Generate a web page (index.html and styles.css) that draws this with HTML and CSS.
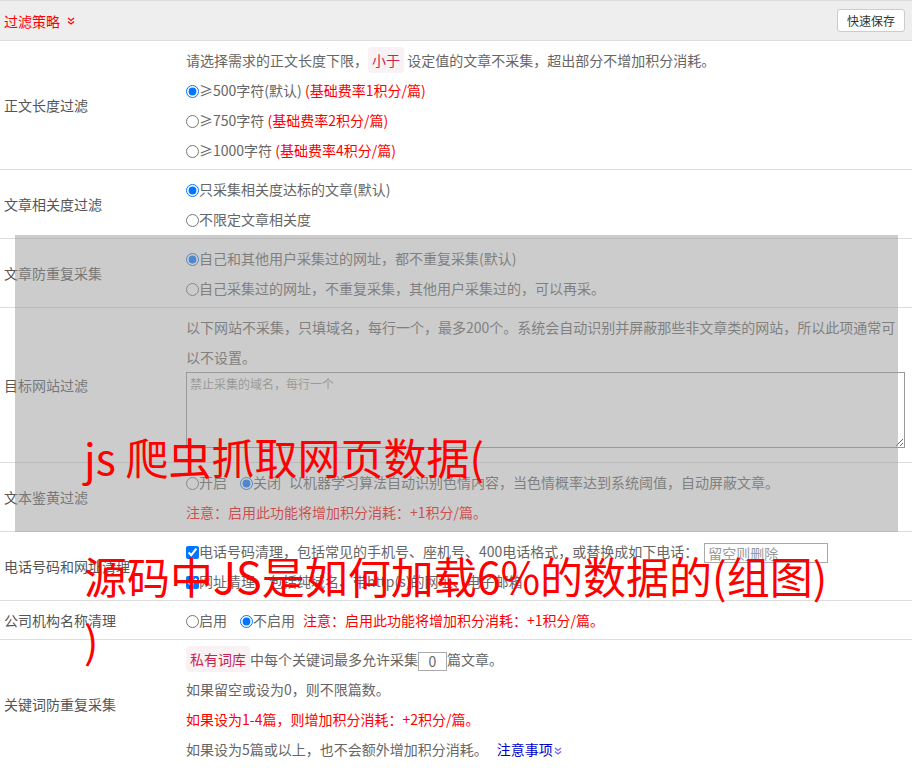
FILE: index.html
```html
<!DOCTYPE html>
<html lang="zh-CN">
<head>
    <meta charset="UTF-8">
    <meta name="viewport" content="width=device-width, initial-scale=1.0">
    <title>过滤策略</title>
    <link rel="stylesheet" href="styles.css">
</head>
<body>
    <div class="panel-head">
        <div class="panel-title">
            过滤策略
            <svg class="chev" width="8" height="8" viewBox="0 0 8 8"><polyline points="1,1 4,3.5 7,1"/><polyline points="1,4.5 4,7 7,4.5"/></svg>
        </div>
        <button class="btn-save">快速保存</button>
    </div>

    <div class="row">
        <div class="row-label">正文长度过滤</div>
        <div class="row-body">
            <div class="line">请选择需求的正文长度下限，<code>小于</code> 设定值的文章不采集，超出部分不增加积分消耗。</div>
            <div class="line"><label><input type="radio" name="len" checked>≥500字符(默认) <span class="red">(基础费率1积分/篇)</span></label></div>
            <div class="line"><label><input type="radio" name="len">≥750字符 <span class="red">(基础费率2积分/篇)</span></label></div>
            <div class="line"><label><input type="radio" name="len">≥1000字符 <span class="red">(基础费率4积分/篇)</span></label></div>
        </div>
    </div>

    <div class="row">
        <div class="row-label">文章相关度过滤</div>
        <div class="row-body">
            <div class="line"><label><input type="radio" name="rel" checked>只采集相关度达标的文章(默认)</label></div>
            <div class="line"><label><input type="radio" name="rel">不限定文章相关度</label></div>
        </div>
    </div>

    <div class="row">
        <div class="row-label">文章防重复采集</div>
        <div class="row-body">
            <div class="line"><label><input type="radio" name="dup" checked>自己和其他用户采集过的网址，都不重复采集(默认)</label></div>
            <div class="line"><label><input type="radio" name="dup">自己采集过的网址，不重复采集，其他用户采集过的，可以再采。</label></div>
        </div>
    </div>

    <div class="row">
        <div class="row-label">目标网站过滤</div>
        <div class="row-body">
            <div class="line">以下网站不采集，只填域名，每行一个，最多200个。系统会自动识别并屏蔽那些非文章类的网站，所以此项通常可以不设置。</div>
            <textarea class="site-list" placeholder="禁止采集的域名，每行一个"></textarea>
        </div>
    </div>

    <div class="row">
        <div class="row-label">文本鉴黄过滤</div>
        <div class="row-body">
            <div class="line"><label class="opt"><input type="radio" name="porn">开启</label><label class="opt last"><input type="radio" name="porn" checked>关闭</label>以机器学习算法自动识别色情内容，当色情概率达到系统阈值，自动屏蔽文章。</div>
            <div class="line red">注意：启用此功能将增加积分消耗：+1积分/篇。</div>
        </div>
    </div>

    <div class="row">
        <div class="row-label">电话号码和网址清理</div>
        <div class="row-body">
            <div class="line"><label><input type="checkbox" checked>电话号码清理，包括常见的手机号、座机号、400电话格式，或替换成如下电话：</label><input class="phone" type="text" placeholder="留空则删除"></div>
            <div class="line"><label><input type="checkbox" checked>网址清理，包括纯域名、带http(s)的网址、电子邮箱</label></div>
        </div>
    </div>

    <div class="row">
        <div class="row-label">公司机构名称清理</div>
        <div class="row-body">
            <div class="line"><label class="opt"><input type="radio" name="org">启用</label><label class="opt last"><input type="radio" name="org" checked>不启用</label><span class="red">注意：启用此功能将增加积分消耗：+1积分/篇。</span></div>
        </div>
    </div>

    <div class="row">
        <div class="row-label">关键词防重复采集</div>
        <div class="row-body">
            <div class="line"><code>私有词库</code>中每个关键词最多允许采集<input class="num" type="text" value="0">篇文章。</div>
            <div class="line">如果留空或设为0，则不限篇数。</div>
            <div class="line red">如果设为1-4篇，则增加积分消耗：+2积分/篇。</div>
            <div class="line">如果设为5篇或以上，也不会额外增加积分消耗。<a class="tips" href="#">注意事项<svg class="chev" width="8" height="8" viewBox="0 0 8 8"><polyline points="1,1 4,3.5 7,1"/><polyline points="1,4.5 4,7 7,4.5"/></svg></a></div>
        </div>
    </div>

    <div class="mask"></div>
    <h1 class="cover-title">
        <span class="first">js 爬虫抓取网页数据(</span>
        <span>源码中JS是如何加载6%的数据的(组图)</span>
        <span>)</span>
    </h1>
</body>
</html>
```

FILE: styles.css
```css
* {
    box-sizing: border-box;
}

html, body {
    overflow: hidden;
}

body {
    margin: 0;
    position: relative;
    font-family: "Noto Sans CJK SC", "Microsoft YaHei", sans-serif;
    font-size: 14px;
    color: #666;
    background: #fff;
}

.panel-head {
    display: flex;
    justify-content: space-between;
    align-items: center;
    height: 41px;
    padding: 0 7px 0 4px;
    background: #eee;
    border-top: 1px solid #ddd;
    border-bottom: 1px solid #ddd;
}

.panel-title {
    display: flex;
    align-items: center;
    gap: 7px;
    color: #f00;
}

.chev {
    fill: none;
    stroke: currentColor;
    stroke-width: 1.2;
}

.btn-save {
    height: 23px;
    padding: 0 9px;
    font-family: inherit;
    font-size: 12px;
    color: #333;
    background: #fff;
    border: 1px solid #ccc;
    border-radius: 3px;
}

.row {
    display: grid;
    grid-template-columns: 186px 1fr;
    border-bottom: 1px solid #ddd;
}

.row-label {
    display: flex;
    align-items: center;
    padding-left: 4px;
    color: #555;
}

.row-body {
    padding: 4px 7px 4px 0;
}

.line {
    line-height: 30px;
}

.red {
    color: #f00;
}

code {
    font-family: inherit;
    font-size: 14px;
    color: #c7254e;
    background: #f9f2f4;
    padding: 3px 4px;
    border-radius: 4px;
}

input[type="radio"],
input[type="checkbox"] {
    width: 13px;
    height: 13px;
    margin: 0;
    vertical-align: -2px;
}

.opt {
    margin-right: 13px;
}

.opt.last {
    margin-right: 8px;
}

.phone {
    width: 124px;
    height: 20px;
    margin-left: 6px;
    padding: 0 3px;
    font-family: inherit;
    font-size: 14px;
    border: 1px solid #aaa;
    vertical-align: middle;
}

.num {
    width: 29px;
    height: 19px;
    padding: 0;
    text-align: center;
    font-family: inherit;
    font-size: 14px;
    color: #666;
    border: 1px solid #aaa;
    vertical-align: middle;
}

::placeholder {
    color: #999;
}

.site-list {
    display: block;
    width: 100%;
    height: 76px;
    margin-bottom: 10px;
    padding: 2px 3px;
    font-family: inherit;
    font-size: 12px;
    border: 1px solid #999;
}

.tips {
    margin-left: 9px;
    color: #00c;
    text-decoration: none;
}

.tips .chev {
    margin-left: 1px;
    stroke: #66f;
}

.mask {
    position: absolute;
    left: 15px;
    top: 235px;
    width: 883px;
    height: 297px;
    background: rgba(153, 153, 153, 0.5);
}

.cover-title {
    position: absolute;
    left: 84px;
    top: 424px;
    margin: 0;
    font-size: 43px;
    font-weight: normal;
    line-height: 64px;
    color: #f00;
    white-space: nowrap;
}

.cover-title span {
    display: block;
}

.cover-title .first {
    margin-bottom: 55px;
}
```
